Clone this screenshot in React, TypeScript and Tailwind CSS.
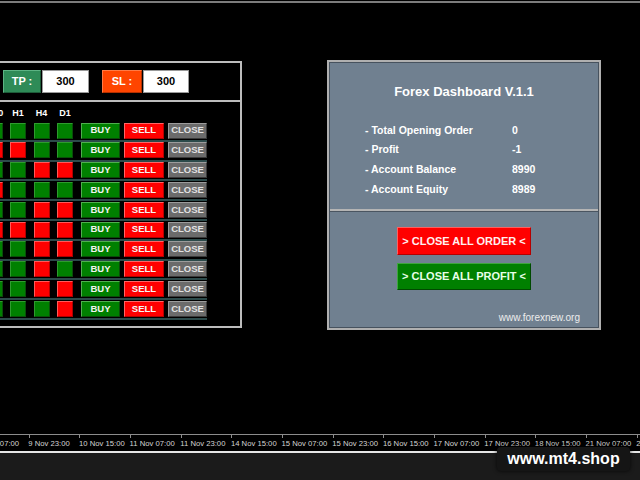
import React from "react";

const FONT = "font-['Liberation_Sans',Arial,sans-serif]";

// hidden M1/M5/M15 columns sit off-screen on the left, then M30, H1, H4, D1
const signals = [
  "grg" + "gggg",
  "ggr" + "rrgg",
  "rgg" + "ggrr",
  "grr" + "rggg",
  "ggg" + "ggrr",
  "rrg" + "rrrr",
  "gqg".replace("q", "r") + "ggrr",
  "rgg" + "ggrg",
  "ggr" + "ggrr",
  "grg" + "gggr",
];

const tfs = ["M1", "M5", "M15", "M30", "H1", "H4", "D1"];

const ticks = [
  "9 Nov 07:00",
  "9 Nov 23:00",
  "10 Nov 15:00",
  "11 Nov 07:00",
  "11 Nov 23:00",
  "14 Nov 15:00",
  "15 Nov 07:00",
  "15 Nov 23:00",
  "16 Nov 15:00",
  "17 Nov 07:00",
  "17 Nov 23:00",
  "18 Nov 15:00",
  "21 Nov 07:00",
  "21 Nov 23:00",
];

function Square({ c }: { c: string }) {
  return c === "g" ? (
    <div className="w-[16px] h-[16px] shrink-0 bg-[#008000] border border-t-[#2f9a2f] border-l-[#2f9a2f] border-b-[#0a4f0a] border-r-[#0a4f0a]" />
  ) : (
    <div className="w-[16px] h-[16px] shrink-0 bg-[#ff0000] border border-t-[#ff5a5a] border-l-[#ff5a5a] border-b-[#b00000] border-r-[#b00000]" />
  );
}

function TradeRow({ sig }: { sig: string }) {
  return (
    <div className="h-[19.8px] flex flex-col">
      <div className="flex h-[16px] pl-[14px]">
        <div className="flex gap-[7.5px]">
          {sig.split("").map((c, i) => (
            <Square key={i} c={c} />
          ))}
        </div>
        <div className="ml-[8px] w-[39px] flex items-center justify-center bg-[#008000] border border-t-[#4fae4f] border-l-[#4fae4f] border-b-[#0a4a0a] border-r-[#0a4a0a] text-[9.5px] font-bold text-[#f2f2f2]">
          BUY
        </div>
        <div className="ml-[4px] w-[40px] flex items-center justify-center bg-[#ff0000] border border-t-[#ff6666] border-l-[#ff6666] border-b-[#b30000] border-r-[#b30000] text-[9.5px] font-bold text-[#f5f5f5]">
          SELL
        </div>
        <div className="ml-[4px] w-[39px] flex items-center justify-center bg-[#6b6b6b] border border-t-[#9c9c9c] border-l-[#9c9c9c] border-b-[#3a3a3a] border-r-[#3a3a3a] text-[9.5px] font-bold text-[#e2e2e2]">
          CLOSE
        </div>
      </div>
      <div className="mt-[1.3px] h-[2px] w-[305px] bg-[#2c4a4a]" />
    </div>
  );
}

function TradePanel() {
  return (
    <div className="-ml-[100px] mt-[1px] w-[342px] h-[267px] shrink-0 border-2 border-[#bdbdbd] flex flex-col">
      <div className="h-[37px] pt-[7px] pl-[101px] flex items-start">
        <div className="w-[38px] h-[23px] flex items-center justify-center bg-[#2e8b57] border border-t-[#5cb383] border-l-[#5cb383] border-b-[#1d5c39] border-r-[#1d5c39] text-[11px] font-bold text-white">
          TP :
        </div>
        <div className="ml-[1px] w-[47px] h-[23px] flex items-center justify-center bg-white border border-[#9a9a9a] text-[11px] font-bold text-black">
          300
        </div>
        <div className="ml-[13px] w-[40px] h-[23px] flex items-center justify-center bg-[#ff4500] border border-t-[#ff7a45] border-l-[#ff7a45] border-b-[#b33000] border-r-[#b33000] text-[11px] font-bold text-white">
          SL :
        </div>
        <div className="ml-[1px] w-[46px] h-[23px] flex items-center justify-center bg-white border border-[#9a9a9a] text-[11px] font-bold text-black">
          300
        </div>
      </div>
      <div className="h-[2px] bg-[#bdbdbd]" />
      <div className="h-[20.6px] pt-[2px] pl-[14px] flex gap-[7.5px]">
        {tfs.map((t) => (
          <div key={t} className="w-[16px] flex justify-center text-[9px] leading-[18px] font-bold text-white whitespace-nowrap">
            {t}
          </div>
        ))}
      </div>
      {signals.map((s, i) => (
        <TradeRow key={i} sig={s} />
      ))}
    </div>
  );
}

function InfoPanel() {
  const stats: [string, string][] = [
    ["- Total Opening Order", "0"],
    ["- Profit", "-1"],
    ["- Account Balance", "8990"],
    ["- Account Equity", "8989"],
  ];
  return (
    <div className="ml-[85px] w-[274px] h-[270px] shrink-0 border-2 border-[#b0b0b0] bg-[#708090]">
      <div className="h-full border border-[#47525e] flex flex-col">
        <div className="h-[146px]">
          <div className="pt-[21px] text-center text-[13px] leading-[15px] font-bold text-white">
            Forex Dashboard V.1.1
          </div>
          <div className="mt-[21.7px] pl-[35px] flex flex-col">
            {stats.map(([k, v]) => (
              <div key={k} className="h-[19.67px] flex items-center text-[10.5px] font-bold text-white">
                <span className="w-[147px]">{k}</span>
                <span>{v}</span>
              </div>
            ))}
          </div>
        </div>
        <div className="h-[2px] bg-[#b4b4b4]" />
        <div className="h-[1px] bg-[#4a5561]" />
        <div className="flex flex-col items-center">
          <div className="mt-[15px] w-[134px] h-[28px] flex items-center justify-center bg-[#ff0000] border border-t-[#ff5f5f] border-l-[#ff5f5f] border-b-[#b50000] border-r-[#b50000] text-[11px] font-bold text-[#fff0f0]">
            &gt; CLOSE ALL ORDER &lt;
          </div>
          <div className="mt-[8px] w-[134px] h-[27px] flex items-center justify-center bg-[#008000] border border-t-[#3fa53f] border-l-[#3fa53f] border-b-[#004a00] border-r-[#004a00] text-[11px] font-bold text-[#e8ffe8]">
            &gt; CLOSE ALL PROFIT &lt;
          </div>
        </div>
        <div className="mt-[22px] pr-[18px] flex justify-end text-[10px] leading-[12px] text-[#ececec]">
          www.forexnew.org
        </div>
      </div>
    </div>
  );
}

export default function App() {
  return (
    <div className={`relative w-[640px] h-[480px] overflow-hidden bg-black flex flex-col ${FONT}`}>
      <div className="mt-[1px] h-[2px] bg-[#7c7c7c]" />
      <div className="mt-[57px] flex items-start">
        <TradePanel />
        <InfoPanel />
      </div>
      <div className="flex-1" />
      <div className="h-[1px] bg-[#8c8c8c]" />
      <div className="h-[16px] flex -ml-[22.37px]">
        {ticks.map((t) => (
          <div key={t} className="w-[50.67px] shrink-0 flex flex-col">
            <div className="ml-[0.5px] w-[1px] h-[3px] bg-[#8c8c8c]" />
            <div className="mt-[1px] text-[7.7px] leading-[10px] text-[#d4d4d4] whitespace-nowrap">
              {t}
            </div>
          </div>
        ))}
      </div>
      <div className="h-[2px] bg-[#e6e6e6]" />
      <div className="h-[27px] bg-[#1b1b1b]" />

      {/* watermark */}
      <div className="absolute left-[497px] top-[447px] w-[133px] h-[24px] rounded-[4px] bg-[#151515] shadow-[0_0_4px_rgba(0,0,0,0.8)] flex items-center justify-center text-[16px] font-bold text-white">
        www.mt4.shop
      </div>
    </div>
  );
}
